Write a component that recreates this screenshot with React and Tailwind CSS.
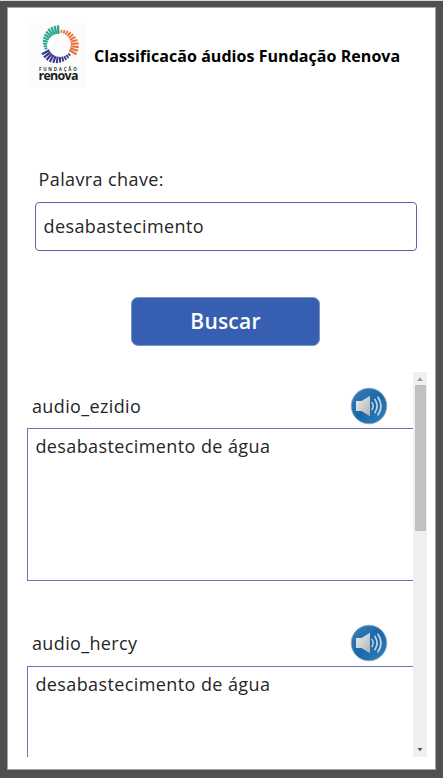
import React from "react";

const font = "font-['Open_Sans','Noto_Sans',sans-serif]";

const ARCS = [
  { color: "#25a58c", from: 255, to: 356 },
  { color: "#ea7440", from: 9, to: 118 },
  { color: "#3a3590", from: 134, to: 242 },
];

function ticks({ color, from, to }) {
  const count = 11;
  return Array.from({ length: count }, (_, i) => {
    const t = i / (count - 1);
    const a = ((from + (to - from) * t) * Math.PI) / 180;
    const inner = 12.4 - t * 1.2;
    const outer = 15.2 + Math.min(1, t * 1.4) * 4.4;
    return (
      <line
        key={color + i}
        x1={31.3 + inner * Math.sin(a)}
        y1={22 - inner * Math.cos(a)}
        x2={31.3 + outer * Math.sin(a)}
        y2={22 - outer * Math.cos(a)}
        stroke={color}
        strokeWidth={1.8 + t * 0.5}
      />
    );
  });
}

function Logo() {
  return (
    <div className="flex h-[65px] w-[58px] shrink-0 flex-col bg-[#fcfcfc]">
      <svg className="h-[44px] w-[58px] shrink-0" viewBox="0 0 58 44">
        {ARCS.map(ticks)}
      </svg>
      <div className="ml-[11px] h-[5px] whitespace-nowrap text-[4.500px] font-bold leading-[5px] tracking-[1.750px] text-[#333]">
        FUNDAÇÃO
      </div>
      <div className="ml-[10.500px] h-[12px] whitespace-nowrap text-[12.500px] font-bold leading-[8px] tracking-[-0.750px] text-[#1c1c1c]">
        renova
      </div>
    </div>
  );
}

function Speaker() {
  return (
    <svg className="size-[38px] shrink-0" viewBox="0 0 38 38">
      <defs>
        <linearGradient id="disc" x1="0" y1="0" x2="1" y2="1">
          <stop offset="0" stopColor="#3a80b8" />
          <stop offset="0.5" stopColor="#1b68a8" />
          <stop offset="1" stopColor="#3282bd" />
        </linearGradient>
        <linearGradient id="cone" x1="0" y1="0" x2="1" y2="1">
          <stop offset="0" stopColor="#f0f0f0" />
          <stop offset="1" stopColor="#aeb0b3" />
        </linearGradient>
      </defs>
      <circle cx="19" cy="19" r="17.800" fill="url(#disc)" stroke="#8cacc4" strokeWidth="0.9" />
      <path d="M6 14h5.500L20 8.700v20.600L11.500 24H6z" fill="url(#cone)" />
      <g fill="none" stroke="#c5d4e0" strokeLinecap="round">
        <path d="M22 15.500q2.300 3.500 0 7" strokeWidth="1.500" />
        <path d="M25 12.500q4.200 6.500 0 13" strokeWidth="1.700" />
        <path d="M28 10.200q6 8.800 0 17.600" strokeWidth="1.800" />
      </g>
    </svg>
  );
}

function AudioItem({ name, text }) {
  return (
    <section className="h-[237.500px] shrink-0">
      <div className="flex h-[56px] items-start justify-between pl-[5px] pr-[25px] pt-[14.500px]">
        <h2 className="pt-[7px] text-[18px] leading-[25px] tracking-[0.360px]">{name}</h2>
        <Speaker />
      </div>
      <div className="ml-[0.400px] h-[153px] border border-r-0 border-[#6d76b0] px-[7px] pt-[5px] text-[18px] leading-[25px] tracking-[0.400px]">
        {text}
      </div>
    </section>
  );
}

export default function App() {
  return (
    <div className={`h-[778px] w-[443px] overflow-hidden border-t border-[#d5dcd8] bg-[#505050] pl-[7px] pt-[6px] text-[#262626] ${font}`}>
      <main className="flex h-[763px] w-[429px] flex-col border border-[#a2a5a3] bg-white">
        <header className="flex h-[81px] items-start pl-5 pt-[15px]">
          <Logo />
          <h1 className="ml-2 mt-[21px] whitespace-nowrap text-[16px] font-bold leading-6 tracking-[0.050px] text-black">
            Classificacão áudios Fundação Renova
          </h1>
        </header>
        <div className="mt-[78px] pl-[30.500px] text-[18px] leading-[25px] tracking-[0.400px]">Palavra chave:</div>
        <div className="ml-[26.500px] mt-[10px] flex h-[49px] w-[382.500px] shrink-0 items-center rounded-[4px] border border-[#5b66ab] px-2 text-[18px] tracking-[0.400px]">
          desabastecimento
        </div>
        <button className="ml-[123px] mt-[46px] h-[49px] w-[189px] shrink-0 rounded-[7px] border border-[#7f93c5] bg-[#375fb1] text-[21px] font-semibold tracking-[0.200px] text-white">
          Buscar
        </button>
        <div className="ml-[19px] mt-[26px] flex h-[385px] w-[400px] shrink-0">
          <div className="flex w-[386px] flex-col overflow-hidden">
            <AudioItem name="audio_ezidio" text="desabastecimento de água" />
            <AudioItem name="audio_hercy" text="desabastecimento de água" />
          </div>
          <div className="flex w-[14px] flex-col items-center bg-[#f0f0f0]">
            <svg className="h-[13px] w-[14px]" viewBox="0 0 14 13">
              <path d="M4 9h6L7 5.500z" fill="#999" />
            </svg>
            <div className="h-[146px] w-[11px] bg-[#c1c1c1]" />
            <svg className="mt-auto h-[14px] w-[14px]" viewBox="0 0 14 14">
              <path d="M4.500 5h5L7 8.300z" fill="#555" />
            </svg>
          </div>
        </div>
      </main>
    </div>
  );
}
